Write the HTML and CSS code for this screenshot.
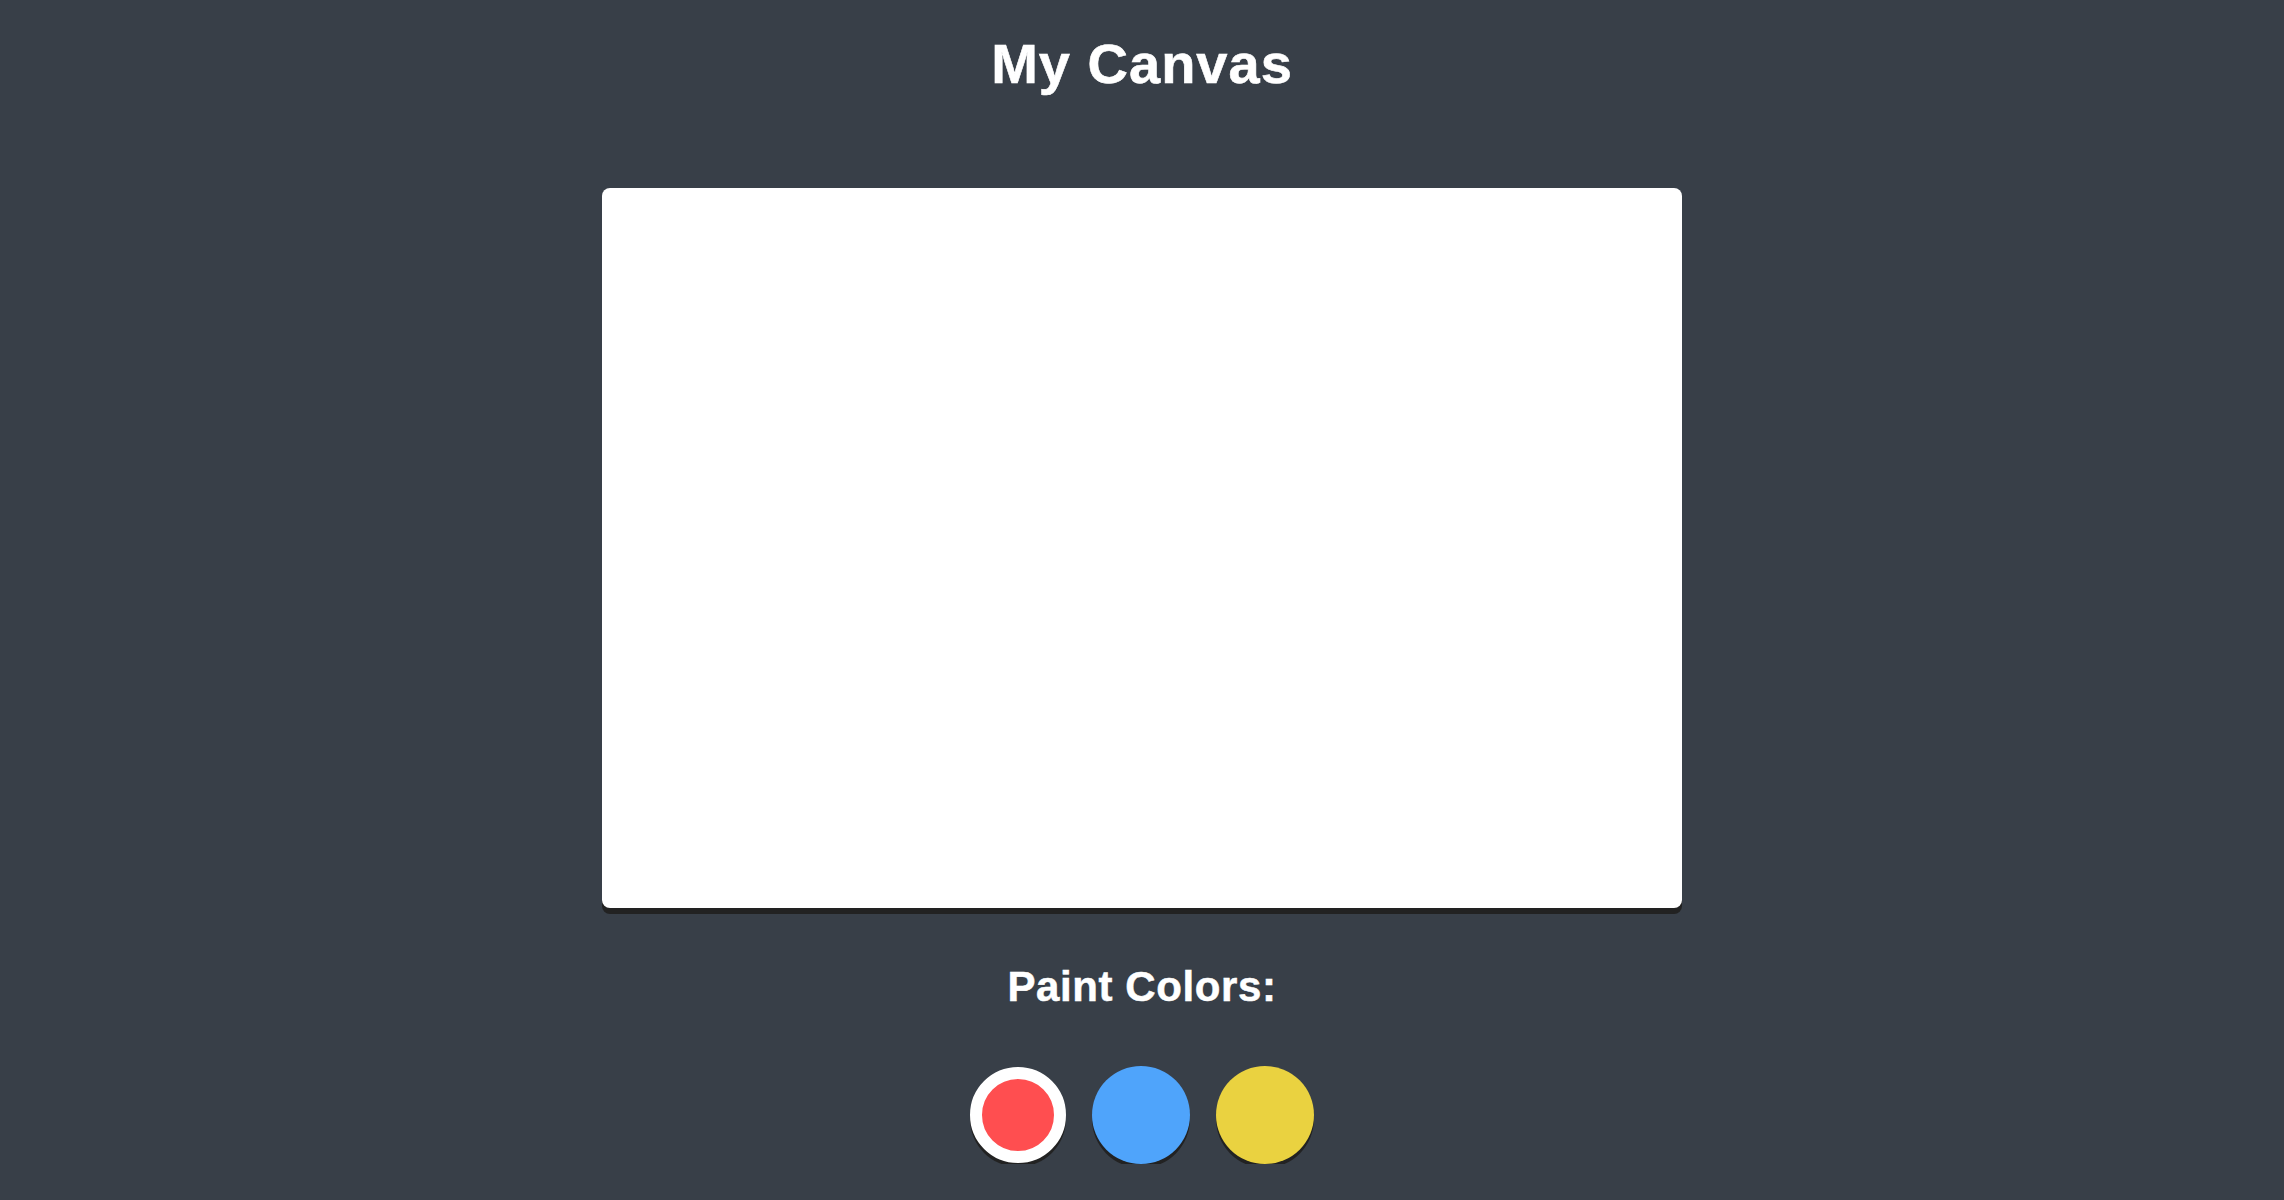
FILE: index.html
```html
<!DOCTYPE html>
<html lang="en">
<head>
<meta charset="utf-8">
<title>My Canvas</title>
<link rel="stylesheet" href="styles.css">
</head>
<body>
  <main class="app">
    <h1 class="title">My Canvas</h1>
    <div class="canvas"></div>
    <h2 class="subtitle">Paint Colors:</h2>
    <div class="palette">
      <button class="swatch swatch-red is-selected" aria-label="red"></button>
      <button class="swatch swatch-blue" aria-label="blue"></button>
      <button class="swatch swatch-yellow" aria-label="yellow"></button>
    </div>
  </main>
</body>
</html>
```

FILE: styles.css
```css
html, body {
  margin: 0;
  padding: 0;
  background: #383f48;
}

body {
  font-family: "Liberation Sans", Arial, Helvetica, sans-serif;
  color: #ffffff;
}

.app {
  display: flex;
  flex-direction: column;
  align-items: center;
  padding-top: 32px;
}

.title {
  margin: 0;
  font-size: 56px;
  line-height: 64px;
  font-weight: 700;
  letter-spacing: 1px;
  -webkit-text-stroke: 0.6px #ffffff;
}

.canvas {
  margin-top: 92px;
  width: 1080px;
  height: 720px;
  background: #ffffff;
  border-radius: 8px;
  box-shadow: 0 6px 0 #222222;
}

.subtitle {
  margin: 55px 0 0;
  font-size: 42px;
  line-height: 48px;
  font-weight: 700;
  letter-spacing: 0.6px;
  -webkit-text-stroke: 0.5px #ffffff;
}

.palette {
  margin-top: 55px;
  display: flex;
  align-items: center;
  gap: 26px;
}

.swatch {
  width: 98px;
  height: 98px;
  border-radius: 50%;
  border: none;
  padding: 0;
  box-shadow: 0 4px 0 #222222;
  cursor: pointer;
}

.swatch-red { background: #ff4e50; }
.swatch-blue { background: #4fa4fb; }
.swatch-yellow { background: #ead240; }

.swatch.is-selected {
  width: 96px;
  height: 96px;
  border: 12px solid #ffffff;
  box-sizing: border-box;
}
```
